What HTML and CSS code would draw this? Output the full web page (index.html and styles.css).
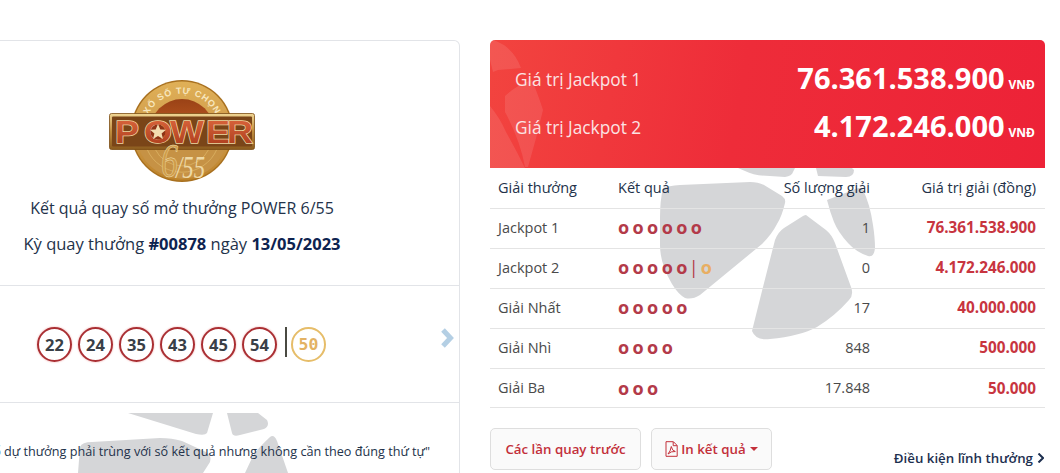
FILE: index.html
```html
<!DOCTYPE html>
<html lang="vi">
<head>
<meta charset="utf-8">
<title>Kết quả POWER 6/55</title>
<link rel="stylesheet" href="styles.css">
</head>
<body>
<svg class="watermark" viewBox="0 0 1060 473" width="1060" height="473" aria-hidden="true">
  <g class="wm-fill">
    <path d="M663 188Q668 186 680 185L750 182Q758 182 764 185L782 196Q786 199 785 203Q782 216 777 224Q772 234 762 244L700 295Q692 300 685 298Q678 294 672 284Q660 264 660 245L660 218Q660 200 663 188Z"/>
    <path d="M806 215L826 230Q832 235 835 243L851 287Q854 295 849 300Q835 316 817 327Q800 336 770 339Q756 341 752 331L763 287L775 240Q778 232 784 228L803 216Q805 215 806 215Z"/>
    <path d="M827 200L853 190Q861 186 863 190Q870 204 873 225Q875 238 875 248Q874 258 868 256Q856 252 848 243Q838 232 834 222Q830 212 827 200Z"/>
    <path d="M738 168L745 171Q755 176 770 176L785 177Q792 176 793 172L795 168Z"/>
    <path d="M816 168L818 176L846 177Q854 177 854 170L852 168Z"/>
    <path d="M128 413L196 434Q205 436 207 433L213 413Z"/>
    <path d="M227 413L232 433Q233 437 240 435L264 429Q270 426 267 420L258 413Z"/>
    <path d="M80 447Q82 442 92 442L160 438Q172 438 182 441L206 452Q212 456 210 462L203 473L78 473Z"/>
    <path d="M245 473L252 458Q256 450 270 437Q274 434 277 441L288 473Z"/>
  </g>
</svg>
<main class="page">
  <section class="left">
    <div class="brand">
      <svg class="logo" viewBox="0 0 146 106" width="146" height="106" role="img" aria-label="Xổ số tự chọn POWER 6/55">
        <defs>
          <linearGradient id="gold" x1="0" y1="0" x2="0" y2="1">
            <stop offset="0" stop-color="#e0b057"/>
            <stop offset=".5" stop-color="#cf9c4c"/>
            <stop offset="1" stop-color="#bd8229"/>
          </linearGradient>
          <linearGradient id="bar" x1="0" y1="0" x2="0" y2="1">
            <stop offset="0" stop-color="#f0d694"/>
            <stop offset=".5" stop-color="#c08d3d"/>
            <stop offset="1" stop-color="#8a5a1e"/>
          </linearGradient>
          <linearGradient id="core" x1="0" y1="0" x2="0" y2="1">
            <stop offset="0" stop-color="#9a4216"/>
            <stop offset="1" stop-color="#e0742e"/>
          </linearGradient>
          <linearGradient id="letter" x1="0" y1="0" x2="0" y2="1">
            <stop offset="0" stop-color="#e06a40"/>
            <stop offset="1" stop-color="#a8391a"/>
          </linearGradient>
          <path id="arc" d="M38 38A38 38 0 0 1 108 38"/>
        </defs>
        <circle cx="73" cy="52" r="51" fill="#a8701f"/>
        <circle cx="73" cy="52" r="49.500" fill="url(#gold)"/>
        <circle cx="73" cy="52" r="32" fill="url(#core)"/>
        <path d="M30 70H116A46 46 0 0 1 30 70Z" fill="#c69245"/>
        <path d="M38 70A38 38 0 0 0 108 70M46 70A30 30 0 0 0 100 70" fill="none" stroke="#e3bd6e" stroke-width=".6"/>
        <text class="logo-arc"><textPath href="#arc" startOffset="50%" text-anchor="middle">XỔ SỐ TỰ CHỌN</textPath></text>
        <rect x="0.500" y="34.500" width="145" height="36" rx="2" fill="url(#bar)" stroke="#7b4d14" stroke-width=".8"/>
        <rect x="3" y="37.500" width="140" height="30" rx="1" fill="#7a4518"/>
        <text class="logo-power" transform="scale(1.12 1)" x="5.400 31.300 54.500 86.600 105.400" y="64">POWER</text>
        <circle cx="49" cy="53" r="7.500" fill="#8f3416"/>
        <polygon points="49,45 51.300,50.500 57,50.800 52.600,54.500 54,60 49,57 44,60 45.400,54.500 41,50.800 46.700,50.500" fill="#f3dcb0"/>
        <text class="logo-six" x="52" y="98" textLength="17" lengthAdjust="spacingAndGlyphs">6</text>
        <text class="logo-five" x="67" y="99" textLength="29" lengthAdjust="spacingAndGlyphs">/55</text>
      </svg>
      <p class="brand-title">Kết quả quay số mở thưởng POWER 6/55</p>
      <p class="brand-draw">Kỳ quay thưởng <b>#00878</b> ngày <b>13/05/2023</b></p>
    </div>
    <div class="draw">
      <div class="balls">
        <span class="ball">22</span>
        <span class="ball">24</span>
        <span class="ball">35</span>
        <span class="ball">43</span>
        <span class="ball">45</span>
        <span class="ball">54</span>
        <span class="ball-sep"></span>
        <span class="ball ball-bonus">50</span>
      </div>
      <svg class="next" viewBox="0 0 14 20" width="14" height="20" aria-hidden="true"><path d="M3 2L10.500 10L3 18"/></svg>
    </div>
    <div class="note"><span>"Các con số dự thưởng phải trùng với số kết quả nhưng không cần theo đúng thứ tự"</span></div>
  </section>
  <section class="right">
    <div class="jackpot">
      <svg class="jackpot-art" viewBox="0 0 60 128" width="60" height="128" aria-hidden="true">
        <path d="M0 3Q0 0 4 0L14 5Q26 14 31 28L8 30L3 32L0 20Z"/>
        <path d="M15 56Q28 44 42 40Q50 60 53 70Q46 100 38 127H35Q30 100 15 72Z"/>
        <path d="M0 66Q10 78 16 92Q26 110 35 128H0Z"/>
      </svg>
      <div class="jackpot-row"><span class="jackpot-label">Giá trị Jackpot 1</span><span class="jackpot-value">76.361.538.900<small>VNĐ</small></span></div>
      <div class="jackpot-row"><span class="jackpot-label">Giá trị Jackpot 2</span><span class="jackpot-value">4.172.246.000<small>VNĐ</small></span></div>
    </div>
    <table class="prizes">
      <colgroup><col class="c1"><col class="c2"><col class="c3"><col class="c4"></colgroup>
      <thead>
        <tr><th>Giải thưởng</th><th>Kết quả</th><th class="num">Số lượng giải</th><th class="num">Giá trị giải (đồng)</th></tr>
      </thead>
      <tbody>
        <tr><td>Jackpot 1</td><td class="rings">oooooo</td><td class="num">1</td><td class="num money">76.361.538.900</td></tr>
        <tr><td>Jackpot 2</td><td class="rings">ooooo<i class="pipe">|</i><i class="ring-bonus">o</i></td><td class="num">0</td><td class="num money">4.172.246.000</td></tr>
        <tr><td>Giải Nhất</td><td class="rings">ooooo</td><td class="num">17</td><td class="num money">40.000.000</td></tr>
        <tr><td>Giải Nhì</td><td class="rings">oooo</td><td class="num">848</td><td class="num money">500.000</td></tr>
        <tr><td>Giải Ba</td><td class="rings">ooo</td><td class="num">17.848</td><td class="num money">50.000</td></tr>
      </tbody>
    </table>
    <div class="actions">
      <a class="btn btn-prev" href="#">Các lần quay trước</a>
      <a class="btn btn-print" href="#">
        <svg class="pdf" viewBox="0 0 13 16" width="13" height="16" aria-hidden="true"><path d="M1 .7H8.400L12.200 4.500V15.300H1Z M8.200 .9V4.700H12"/><path d="M3 13Q5.500 10.500 6.300 5.500Q7 9.800 10.300 10.500Q6 10 3 13Z"/></svg>
        <span>In kết quả</span><i class="caret"></i>
      </a>
      <a class="terms" href="#">Điều kiện lĩnh thưởng<svg viewBox="0 0 7 10" width="7" height="10" aria-hidden="true"><path d="M1.500 .5L6 5L1.500 9.500" /></svg></a>
    </div>
  </section>
</main>
</body>
</html>
```
FILE: styles.css
```css
* { box-sizing: border-box; }
html, body { margin: 0; height: 473px; overflow: hidden; background: #fff; }
body { position: relative; font-family: "Open Sans", "Noto Sans", sans-serif; color: #333; }

.watermark { position: absolute; left: 0; top: 0; }
.wm-fill { fill: #d5d6d8; }

.page { position: relative; display: flex; width: 1060px; height: 473px; overflow: hidden; padding-top: 40px; gap: 30px; }

/* left card */
.left {
  flex: 0 0 460px;
  min-width: 0;
  height: 470px;
  border: 1px solid #e2e4e8;
  border-left: 0;
  border-radius: 0 6px 0 0;
}
.brand {
  height: 244px;
  width: 364px;
  padding-top: 38px;
  display: flex;
  flex-direction: column;
  align-items: center;
  color: #23324a;
}
.logo { display: block; margin-bottom: 12px; }
.logo-arc { font: 700 9px "Liberation Sans", sans-serif; fill: #f7e6bd; letter-spacing: .8px; }
.logo-power { font: 900 32px "Liberation Sans", sans-serif; fill: url(#letter); stroke: #f0d8a2; stroke-width: 1.400px; paint-order: stroke; }
.logo-six { font: italic 400 49px "Liberation Serif", serif; fill: #cf9c4a; stroke: #f4e2b6; stroke-width: .5px; }
.logo-five { font: italic 400 31px "Liberation Serif", serif; fill: #eed9a6; stroke: none; }
.brand-title, .brand-draw { margin: 0; line-height: 22px; white-space: nowrap; }
.brand-title { font-size: 16px; margin-bottom: 14px; }
.brand-draw { font-size: 16.500px; }
.brand-draw b { color: #0e2350; font-weight: 700; }

.draw {
  height: 118px;
  border-top: 1px solid #e2e4e8;
  border-bottom: 1px solid #e2e4e8;
  position: relative;
  padding: 41px 0 0 37px;
}
.balls { display: flex; align-items: flex-start; gap: 6px; }
.ball {
  flex: 0 0 35px;
  width: 35px;
  height: 35px;
  border: 2px solid #aa2f33;
  border-radius: 50%;
  box-shadow: 0 0 2px #f0a0a0;
  display: flex;
  align-items: center;
  justify-content: center;
  font-size: 16.500px;
  font-weight: 700;
  color: #3a3f47;
}
.ball-sep { flex: 0 0 2px; height: 30px; background: #4a4a42; margin: 0 -2px 0 2px; }
.ball-bonus {
  border-color: #e6bd69;
  box-shadow: none;
  color: #e3b264;
  font-family: "DejaVu Sans Mono", monospace;
  font-size: 16.500px;
}
.next { position: absolute; right: 5px; top: 42px; fill: none; stroke: #b4cfe4; stroke-width: 5; }

.note {
  display: flex;
  justify-content: flex-end;
  padding: 39px 29px 0 0;
  font-size: 12.650px;
  line-height: 18px;
  color: #23324a;
  white-space: nowrap;
}
.note span { flex: none; }

/* right column */
.right { flex: 0 0 555px; }
.jackpot {
  position: relative;
  height: 128px;
  padding: 15px 10px 0 25px;
  border-radius: 5px 5px 0 0;
  background: linear-gradient(100deg, #f2443f 0%, #ee2c39 45%, #ed2237 100%);
  color: #fff;
  overflow: hidden;
}
.jackpot-art { position: absolute; left: 0; top: 0; fill: rgba(255,255,255,.1); }
.jackpot-row {
  position: relative;
  height: 48px;
  display: flex;
  align-items: center;
  justify-content: space-between;
}
.jackpot-label { font-size: 17.300px; color: #fbe3e3; }
.jackpot-value { font-size: 29px; font-weight: 700; white-space: nowrap; margin-bottom: 4px; }
.jackpot-value small { font-size: 12px; margin-left: 4px; }

.prizes { width: 555px; table-layout: fixed; border-collapse: collapse; }
.c1 { width: 120px; }
.c2 { width: 150px; }
.c3 { width: 118px; }
.c4 { width: 167px; }
.prizes th, .prizes td {
  height: 40px;
  padding: 0 8px;
  border-bottom: 1px solid #e4e4e4;
  text-align: left;
  font-size: 14.500px;
  white-space: nowrap;
}
.prizes td { padding-bottom: 2px; color: #4a4a4a; }
.prizes th { font-weight: 400; color: #23324a; }
.prizes tr:last-child td { height: 39px; padding-bottom: 0; }
.prizes .num { text-align: right; }
.prizes .money { font-size: 15.300px; font-weight: 700; color: #c8353f; padding-right: 9px; }
.prizes th:last-child { padding-right: 9px; }
.prizes .rings { font-size: 18px; font-weight: 700; letter-spacing: 3.400px; color: #b33a49; }
.rings i { font-style: normal; }
.rings .pipe { font-weight: 400; letter-spacing: 2px; margin-left: -2px; }
.rings .ring-bonus { color: #e8ae62; }

.actions { display: flex; align-items: flex-start; gap: 10px; margin-top: 20px; }
.btn {
  height: 42px;
  display: flex;
  align-items: center;
  justify-content: center;
  gap: 3px;
  border: 1px solid #dedede;
  border-radius: 5px;
  background: #fafafa;
  color: #c3303a;
  font-size: 13.300px;
  font-weight: 600;
  text-decoration: none;
}
.btn-prev { width: 151px; }
.btn-print { width: 121px; }
.pdf { fill: none; stroke: #c3303a; stroke-width: 1; }
.caret { width: 0; height: 0; margin-left: 1px; border: 4px solid transparent; border-top-color: #c3303a; border-bottom: 0; }
.terms {
  margin-left: auto;
  margin-top: 21px;
  margin-right: 1px;
  display: flex;
  align-items: center;
  gap: 4px;
  color: #1d2f4f;
  font-size: 13.300px;
  font-weight: 600;
  text-decoration: none;
  white-space: nowrap;
}
.terms svg { fill: none; stroke: #1d2f4f; stroke-width: 2; }
```
